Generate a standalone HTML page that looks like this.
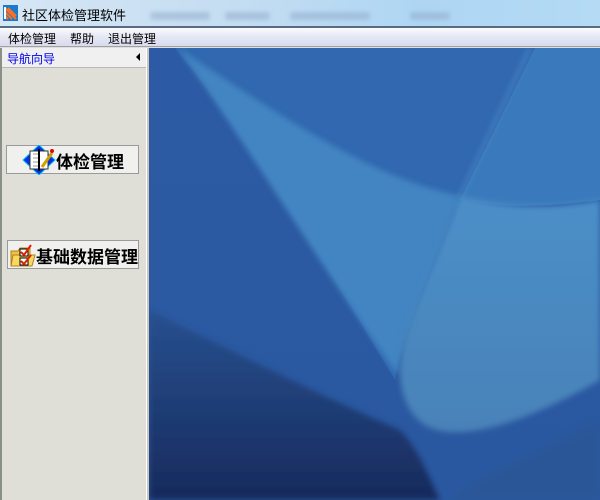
<!DOCTYPE html>
<html><head><meta charset="utf-8"><style>
*{margin:0;padding:0;box-sizing:border-box}
body{width:600px;height:500px;overflow:hidden;position:relative;font-family:"Liberation Sans","Noto Sans CJK SC",sans-serif;background:#dfdfd8}
#title{position:absolute;left:0;top:0;width:600px;height:27px;background:linear-gradient(90deg,#d6e6f4 0%,#c4ddf2 40%,#aed6f3 70%,#b4daf4 100%)}
#title .t{position:absolute;left:22px;top:5px;font-size:13px;color:#000}
#title .blur{position:absolute;top:12px;height:8px;background:#8ea9c8;opacity:.5;filter:blur(2px);border-radius:3px}
#tline{position:absolute;left:0;top:26px;width:600px;height:2px;background:#5a6a80}
#menu{position:absolute;left:0;top:28px;width:600px;height:19px;background:linear-gradient(#fbfcfe,#e6e8f4 45%,#d8dbee);font-size:12px;border-bottom:1px solid #a0a0a8}
#menu span{position:absolute;top:2px}
#nav{position:absolute;left:0;top:48px;width:146px;height:452px;background:#dfdfd8;border-left:2px solid #8a8f88}
#navh{position:absolute;left:2px;top:48px;width:144px;height:20px;background:#f0f0f0;border-bottom:1px solid #b8b8b8;color:#0000ee;font-size:12px;padding:2px 0 0 5px}
#navh b{position:absolute;right:6px;top:5px;width:0;height:0;border-top:4px solid transparent;border-bottom:4px solid transparent;border-right:4px solid #000}
#sep{position:absolute;left:146px;top:48px;width:3px;height:452px;background:#c8c8c0;border-left:1px solid #fff}
.btn{position:absolute;height:29px;background:#f0f0ee;border:1px solid #9a9a9a;font-size:17px;font-weight:bold;color:#000}
.btn span{position:absolute;top:2px}
#desk{position:absolute;left:149px;top:48px;width:451px;height:452px;overflow:hidden}
</style></head><body>
<div id="title">
<svg style="position:absolute;left:3px;top:5px" width="15" height="16"><rect width="15" height="16" fill="#1a7ad0"/><path d="M2 3 L13 14 M2 7 L9 14 M5 3 L13 11 M2 11 L5 14" stroke="#ff7020" stroke-width="2"/><path d="M2 2 L2 14" stroke="#fff" stroke-width="2"/></svg>
<div class="t">社区体检管理软件</div>
<div class="blur" style="left:150px;width:60px"></div>
<div class="blur" style="left:225px;width:45px"></div>
<div class="blur" style="left:290px;width:80px"></div>
<div class="blur" style="left:410px;width:40px"></div>
</div>
<div id="tline"></div>
<div id="menu"><span style="left:8px">体检管理</span><span style="left:70px">帮助</span><span style="left:108px">退出管理</span></div>
<div id="nav"></div>
<div id="navh">导航向导<b></b></div>
<div id="sep"></div>
<div class="btn" style="left:6px;top:145px;width:133px">
<svg style="position:absolute;left:15px;top:-1px" width="34" height="30"><path d="M17 0 L33 15 L17 30 L1 15 Z" fill="#0a30e0" stroke="#00c0ff"/><rect x="8" y="6" width="18" height="18" fill="#fff" stroke="#333"/><path d="M11 9h5M11 13h5M11 17h5M11 21h5" stroke="#999"/><path d="M17 4V26" stroke="#000" stroke-width="2"/><path d="M20 22 L30 8" stroke="#d0a000" stroke-width="3"/><circle cx="30" cy="6" r="2" fill="#e00"/></svg>
<span style="left:49px">体检管理</span></div>
<div class="btn" style="left:7px;top:240px;width:132px">
<svg style="position:absolute;left:2px;top:2px" width="28" height="25"><path d="M1 8 H8 L10 5 H20 V22 H1 Z" fill="#f0c040" stroke="#b08020"/><path d="M3 12 H25 L22 23 H1 Z" fill="#f8d860" stroke="#b08020"/><rect x="10" y="6" width="8" height="7" fill="#fff" stroke="#000"/><rect x="10" y="15" width="8" height="7" fill="#fff" stroke="#000"/><path d="M11 9l3 3 7-10M11 18l3 3 7-9" stroke="#e02000" stroke-width="2" fill="none"/></svg>
<span style="left:28px">基础数据管理</span></div>
<div id="desk">
<svg width="451" height="452" viewBox="149 48 451 452">
<defs>
<linearGradient id="bg" x1="0" y1="0" x2="0" y2="1"><stop offset="0" stop-color="#2c5aa4"/><stop offset="1" stop-color="#2a58a0"/></linearGradient>
<linearGradient id="dk" x1="0" y1="0" x2="0" y2="1"><stop offset="0" stop-color="#27508f"/><stop offset="1" stop-color="#172a5c"/></linearGradient>
<linearGradient id="lt" x1="0" y1="0" x2="0" y2="1"><stop offset="0" stop-color="#4b8fc8"/><stop offset="1" stop-color="#4a82b8"/></linearGradient>
<filter id="b"><feGaussianBlur stdDeviation="3"/></filter>
</defs>
<rect x="149" y="48" width="451" height="452" fill="url(#bg)"/>
<path d="M175 48 H535 L460 200 C420 290 400 350 395 380 C330 270 250 140 175 48Z" fill="#3168b0"/>
<path d="M535 48 H600 V200 C560 205 510 210 460 200Z" fill="#3a7abc"/>
<path d="M178 48 C300 130 380 180 460 196 L420 300 C405 340 398 360 398 375 C330 280 250 150 178 48Z" fill="#4285c2" filter="url(#b)"/>
<path d="M460 196 C520 212 570 206 600 200 L600 380 C530 420 460 445 425 425 C395 405 395 360 410 320Z" fill="url(#lt)" filter="url(#b)"/>
<path d="M149 310 C250 360 330 400 400 430 C420 450 430 480 440 500 H149Z" fill="url(#dk)" filter="url(#b)"/>
<path d="M600 420 C520 460 470 480 450 500 H600Z" fill="#2a5698" filter="url(#b)"/>
<path d="M530 48 L460 196" stroke="#6aaede" stroke-width="2" opacity=".6" filter="url(#b)"/>
</svg>
</div>
</body></html>
